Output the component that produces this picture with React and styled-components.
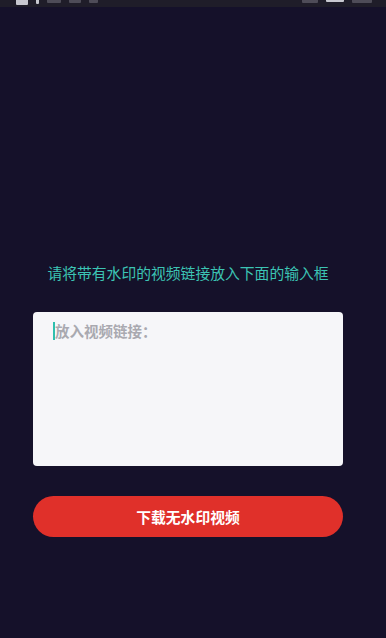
import React, { useState } from 'react';
import styled, { createGlobalStyle } from 'styled-components';

const GlobalStyle = createGlobalStyle`
  html, body {
    margin: 0;
    padding: 0;
    background: #15112a;
  }
  * {
    box-sizing: border-box;
  }
`;

const Page = styled.div`
  width: 386px;
  height: 638px;
  overflow: hidden;
  background: #15112a;
  font-family: "Noto Sans CJK SC", "Noto Sans", sans-serif;
  display: flex;
  flex-direction: column;
`;

const StatusBar = styled.div`
  height: 7px;
  background: #1f1d29;
  display: flex;
  align-items: flex-start;
  justify-content: space-between;
  padding: 0 14px 0 16px;
  overflow: hidden;
`;

const StatusGroup = styled.div`
  display: flex;
  align-items: flex-start;
  gap: 8px;
`;

const StatusBit = styled.span`
  display: block;
  width: ${({ $w }) => $w}px;
  height: ${({ $h }) => $h || 3}px;
  background: ${({ $light }) => ($light ? '#c8c8d0' : '#4e4c58')};
  border-radius: 0 0 1px 1px;
`;

const Main = styled.main`
  flex: 1;
  display: flex;
  flex-direction: column;
  align-items: center;
  padding: 256px 43px 0 33px;
`;

const Hint = styled.p`
  margin: 0;
  font-size: 14.8px;
  line-height: 20px;
  color: #3cc4b4;
  white-space: nowrap;
`;

const Field = styled.div`
  position: relative;
  width: 100%;
  margin-top: 29px;
`;

const InputBox = styled.textarea`
  display: block;
  width: 100%;
  height: 154px;
  border: none;
  outline: none;
  resize: none;
  border-radius: 4px;
  background: #f6f6f9;
  padding: 8px 20px 8px 22px;
  font-family: inherit;
  font-size: 14.5px;
  font-weight: 700;
  color: #333;
  caret-color: #2fbfae;

  &::placeholder {
    color: #a9a9b0;
    font-weight: 700;
  }
`;

const CursorMark = styled.span`
  position: absolute;
  left: 20px;
  top: 10px;
  width: 2px;
  height: 18px;
  background: #2fbfae;
  pointer-events: none;
`;

const DownloadButton = styled.button`
  margin-top: 30px;
  width: 100%;
  height: 41px;
  border: none;
  border-radius: 21px;
  background: #e0302a;
  color: #ffffff;
  font-family: inherit;
  font-size: 14.8px;
  font-weight: 700;
  cursor: pointer;
`;

const App = () => {
  const [link, setLink] = useState('');

  return (
    <>
      <GlobalStyle />
      <Page>
        <StatusBar>
          <StatusGroup>
            <StatusBit $w={12} $h={5} $light />
            <StatusBit $w={3} $h={4} $light />
            <StatusBit $w={14} />
            <StatusBit $w={12} />
            <StatusBit $w={9} />
          </StatusGroup>
          <StatusGroup>
            <StatusBit $w={16} />
            <StatusBit $w={18} $h={2} $light />
            <StatusBit $w={20} />
          </StatusGroup>
        </StatusBar>
        <Main>
          <Hint>请将带有水印的视频链接放入下面的输入框</Hint>
          <Field>
            <InputBox
              value={link}
              onChange={(e) => setLink(e.target.value)}
              placeholder="放入视频链接："
            />
            {!link && <CursorMark />}
          </Field>
          <DownloadButton>下载无水印视频</DownloadButton>
        </Main>
      </Page>
    </>
  );
};

export default App;
